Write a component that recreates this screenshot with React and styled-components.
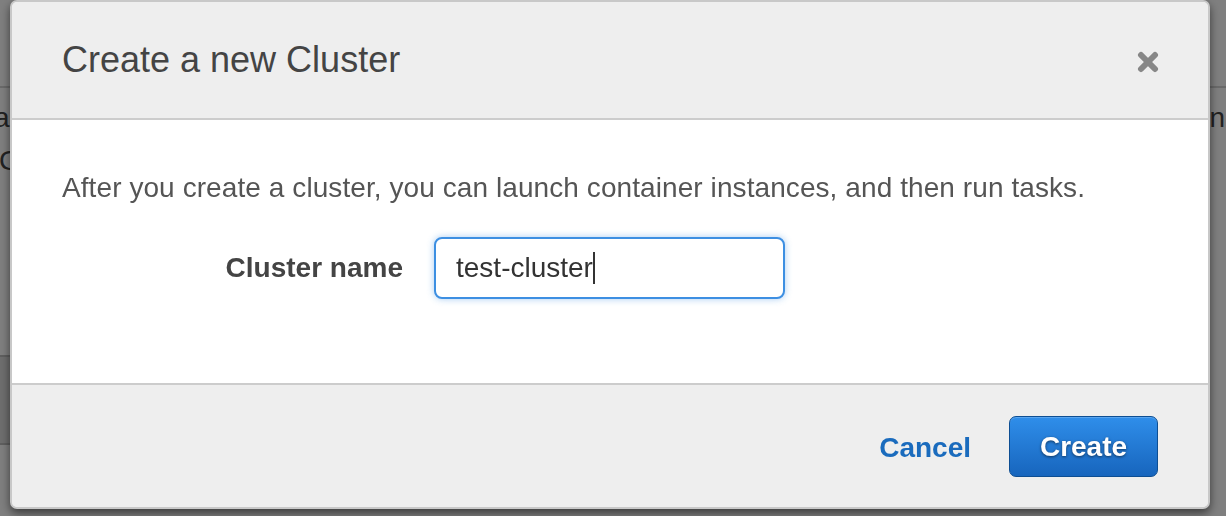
import React from 'react';
import styled, { createGlobalStyle } from 'styled-components';

const GlobalStyle = createGlobalStyle`
  html, body {
    margin: 0;
    padding: 0;
    background: #ffffff;
    overflow: hidden;
  }
  body {
    font-family: "Liberation Sans", Arial, Helvetica, sans-serif;
  }
`

// page behind the dimmed overlay
const Page = styled.div`
  width: 1226px;
  height: 516px;
  background: #ffffff;
`

const PageHeader = styled.div`
  height: 86px;
  border-bottom: 2px solid #d5d5d5;
`

const PageRow = styled.div`
  display: flex;
  justify-content: space-between;
  font-size: 28px;
  line-height: 43px;
  color: #444;
  margin-left: ${p => p.shift || 0}px;
  padding-right: 1px;
`

const PageRows = styled.div`
  margin-top: 8px;
`

const PagePanel = styled.div`
  margin-top: 173px;
  width: 300px;
  height: 86px;
  background: #dcdcdc;
  border-top: 2px solid #bebebe;
  border-bottom: 2px solid #bebebe;
`

const Overlay = styled.div`
  position: fixed;
  inset: 0;
  background: rgba(0, 0, 0, 0.5);
  display: flex;
  justify-content: flex-start;
  align-items: flex-start;
  padding-left: 10px;
`

const Modal = styled.div`
  width: 1200px;
  box-sizing: border-box;
  border: 2px solid #c8c8c8;
  border-radius: 7px;
  overflow: hidden;
  box-shadow: 0 4px 10px rgba(0, 0, 0, 0.55);
  background: #eeeeee;
`

const Header = styled.div`
  display: flex;
  align-items: center;
  justify-content: space-between;
  padding: 37px 49px 37px 50px;
  background: #eeeeee;
  border-bottom: 2px solid #cccccc;
`

const Title = styled.h2`
  margin: 0;
  font-size: 36px;
  line-height: 42px;
  font-weight: normal;
  color: #444444;
`

const CloseButton = styled.button`
  border: 0;
  background: none;
  padding: 0;
  width: 22px;
  height: 22px;
  display: flex;
  cursor: pointer;
  margin-top: 3px;
`

const Body = styled.div`
  background: #ffffff;
  padding: 48px 50px 84px;
`

const Intro = styled.p`
  margin: 0;
  font-size: 28px;
  line-height: 40px;
  color: #555555;
  letter-spacing: 0.08px;
`

const FormRow = styled.div`
  display: flex;
  align-items: center;
  gap: 31px;
  margin-top: 29px;
`

const Label = styled.label`
  width: 341px;
  text-align: right;
  font-size: 28px;
  font-weight: bold;
  color: #444444;
`

const InputBox = styled.div`
  box-sizing: border-box;
  width: 351px;
  height: 62px;
  border: 2px solid #3d8fe2;
  border-radius: 8px;
  box-shadow: 0 0 7px rgba(61, 143, 226, 0.45);
  padding: 0 20px;
  display: flex;
  align-items: center;
  font-size: 28px;
  color: #333333;
  background: #ffffff;
`

const Caret = styled.span`
  display: inline-block;
  width: 2px;
  height: 32px;
  background: #333333;
`

const Footer = styled.div`
  display: flex;
  justify-content: flex-end;
  align-items: center;
  gap: 38px;
  padding: 31px 50px 30px;
  background: #eeeeee;
  border-top: 2px solid #cccccc;
`

const LinkButton = styled.button`
  border: 0;
  background: none;
  padding: 0;
  font-family: inherit;
  font-size: 28px;
  font-weight: bold;
  color: #1a6bbd;
  cursor: pointer;
  margin-top: 3px;
`

const PrimaryButton = styled.button`
  box-sizing: border-box;
  width: 149px;
  height: 61px;
  border: 1px solid #0d4e93;
  border-radius: 7px;
  background: linear-gradient(#2f8eea, #1765bd);
  box-shadow: inset 0 1px 0 rgba(255, 255, 255, 0.2);
  font-family: inherit;
  font-size: 28px;
  font-weight: bold;
  color: #ffffff;
  text-shadow: 0 1px 3px rgba(0, 0, 0, 0.55);
  cursor: pointer;
`

const CloseIcon = () => (
  <svg width="22" height="22" viewBox="0 0 22 22">
    <g stroke="#878787" strokeWidth="6" strokeLinecap="round">
      <line x1="4" y1="4" x2="18" y2="18" />
      <line x1="18" y1="4" x2="4" y2="18" />
    </g>
  </svg>
)

export default function App() {
  return (
    <>
      <GlobalStyle />
      <Page>
        <PageHeader />
        <PageRows>
          <PageRow shift={-6}>
            <span>a</span>
            <span>n</span>
          </PageRow>
          <PageRow shift={-1}>
            <span>C</span>
          </PageRow>
        </PageRows>
        <PagePanel />
      </Page>
      <Overlay>
        <Modal>
          <Header>
            <Title>Create a new Cluster</Title>
            <CloseButton aria-label="Close">
              <CloseIcon />
            </CloseButton>
          </Header>
          <Body>
            <Intro>
              After you create a cluster, you can launch container instances, and then run tasks.
            </Intro>
            <FormRow>
              <Label>Cluster name</Label>
              <InputBox>
                test-cluster<Caret />
              </InputBox>
            </FormRow>
          </Body>
          <Footer>
            <LinkButton>Cancel</LinkButton>
            <PrimaryButton>Create</PrimaryButton>
          </Footer>
        </Modal>
      </Overlay>
    </>
  );
}
